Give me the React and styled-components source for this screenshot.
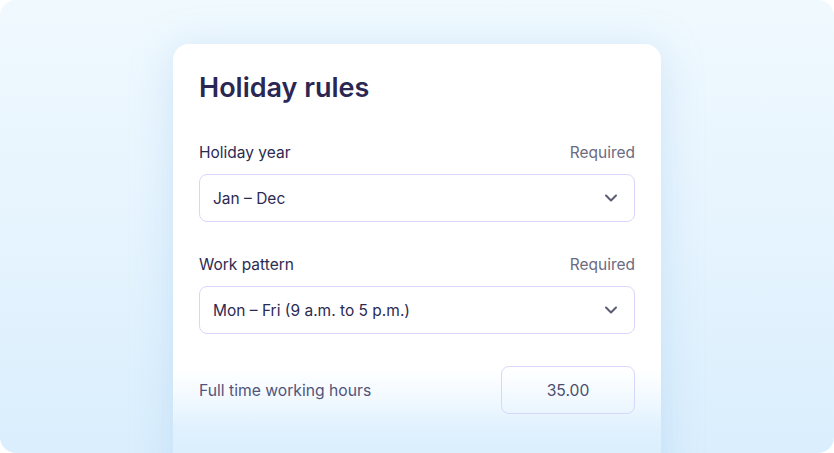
import React from "react";
import styled, { createGlobalStyle } from "styled-components";

const Global = createGlobalStyle`
  html, body {
    margin: 0;
    padding: 0;
    background: #fff;
  }
  body {
    font-family: Inter, "Noto Sans", "Liberation Sans", sans-serif;
    -webkit-font-smoothing: antialiased;
  }
`;

const Frame = styled.div`
  width: 834px;
  height: 453px;
  border-radius: 16px;
  overflow: hidden;
  background: linear-gradient(180deg, #f0f9fe 0%, #e6f4fe 50%, #daeefd 100%);
  display: flex;
  justify-content: center;
  padding-top: 44px;
  box-sizing: border-box;
`;

// card fades into the backdrop towards the bottom edge
const Card = styled.section`
  width: 488px;
  height: 480px;
  flex: none;
  box-sizing: border-box;
  padding: 27px 26px 0;
  background: linear-gradient(
    180deg,
    #ffffff 0px,
    #ffffff 326px,
    #f1f9ff 355px,
    #e2f2fe 380px,
    #dbeffd 405px,
    #daeefd 480px
  );
  border-radius: 16px;
  box-shadow: 0 6px 40px rgba(150, 195, 235, 0.35);
  display: flex;
  flex-direction: column;
`;

const Title = styled.h1`
  margin: 0 0 38px;
  font-size: 27px;
  line-height: 34px;
  font-weight: 600;
  color: #2a2753;
`;

const Field = styled.div`
  display: flex;
  flex-direction: column;
  gap: 11px;
  margin-bottom: ${p => p.$last ? "32px" : "33px"};
`;

const LabelRow = styled.div`
  display: flex;
  justify-content: space-between;
  align-items: center;
  height: 20px;
`;

const Label = styled.span`
  font-size: 15.5px;
  line-height: 20px;
  color: #2d2a52;
`;

const Hint = styled.span`
  font-size: 15.5px;
  line-height: 20px;
  color: #6b6b82;
`;

const Select = styled.div`
  height: 48px;
  box-sizing: border-box;
  border: 1.5px solid #d8d7fb;
  border-radius: 8px;
  display: flex;
  align-items: center;
  justify-content: space-between;
  padding: 0 15px 0 13px;
  font-size: 15.5px;
  color: #2d2a52;
`;

const Row = styled.div`
  display: flex;
  align-items: center;
  justify-content: space-between;
`;

const RowLabel = styled.span`
  font-size: 15.7px;
  color: #52547a;
`;

const NumberBox = styled.div`
  width: 134px;
  height: 48px;
  box-sizing: border-box;
  border: 1.5px solid #d8d7fb;
  border-radius: 8px;
  display: flex;
  align-items: center;
  justify-content: center;
  font-size: 15.7px;
  color: #4b4d6e;
`;

const Chevron = () => (
  <svg width="16" height="16" viewBox="0 0 16 16" fill="none">
    <path
      d="M3 5.5l5 5 5-5"
      stroke="#5a5b72"
      strokeWidth="2"
      strokeLinecap="round"
      strokeLinejoin="round"
    />
  </svg>
);

const fields = [
  { label: "Holiday year", value: "Jan – Dec" },
  { label: "Work pattern", value: "Mon – Fri (9 a.m. to 5 p.m.)" }
];

export default function App() {
  return (
    <>
      <Global />
      <Frame>
        <Card>
          <Title>Holiday rules</Title>
          {fields.map((f, i) => (
            <Field key={f.label} $last={i === fields.length - 1}>
              <LabelRow>
                <Label>{f.label}</Label>
                <Hint>Required</Hint>
              </LabelRow>
              <Select>
                <span>{f.value}</span>
                <Chevron />
              </Select>
            </Field>
          ))}
          <Row>
            <RowLabel>Full time working hours</RowLabel>
            <NumberBox>35.00</NumberBox>
          </Row>
        </Card>
      </Frame>
    </>
  );
}
